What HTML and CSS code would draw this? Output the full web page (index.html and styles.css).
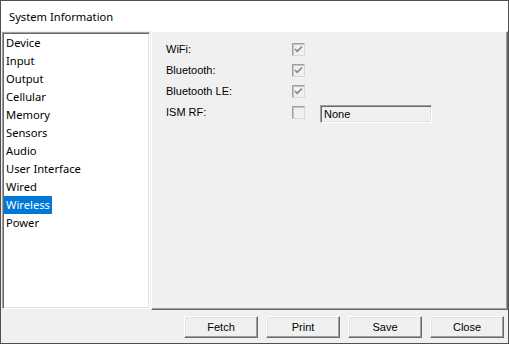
FILE: index.html
```html
<!DOCTYPE html>
<html>
<head>
<meta charset="utf-8">
<link rel="stylesheet" href="styles.css">
</head>
<body>
<div class="window">
  <div class="titlebar">System Information</div>
  <div class="main">
    <div class="listbox">
      <div class="item"><span>Device</span></div>
      <div class="item"><span>Input</span></div>
      <div class="item"><span>Output</span></div>
      <div class="item"><span>Cellular</span></div>
      <div class="item"><span>Memory</span></div>
      <div class="item"><span>Sensors</span></div>
      <div class="item"><span>Audio</span></div>
      <div class="item"><span>User Interface</span></div>
      <div class="item"><span>Wired</span></div>
      <div class="item selected"><span>Wireless</span></div>
      <div class="item"><span>Power</span></div>
    </div>
    <div class="panel">
      <div class="grid">
        <div class="label">WiFi:</div>
        <span class="check"><svg width="11" height="11" viewBox="0 0 11 11"><path d="M2 5 L4.2 7.3 L9 2.5" fill="none" stroke="#858585" stroke-width="1.6"/></svg></span>
        <div></div>
        <div class="label">Bluetooth:</div>
        <span class="check"><svg width="11" height="11" viewBox="0 0 11 11"><path d="M2 5 L4.2 7.3 L9 2.5" fill="none" stroke="#858585" stroke-width="1.6"/></svg></span>
        <div></div>
        <div class="label">Bluetooth LE:</div>
        <span class="check"><svg width="11" height="11" viewBox="0 0 11 11"><path d="M2 5 L4.2 7.3 L9 2.5" fill="none" stroke="#858585" stroke-width="1.6"/></svg></span>
        <div></div>
        <div class="label">ISM RF:</div>
        <span class="check"></span>
        <div class="textbox">None</div>
      </div>
    </div>
  </div>
  <div class="buttons">
    <div class="btn">Fetch</div>
    <div class="btn">Print</div>
    <div class="btn">Save</div>
    <div class="btn">Close</div>
  </div>
</div>
</body>
</html>
```
FILE: styles.css
```css
html, body {
  margin: 0;
  padding: 0;
  background: #f0f0f0;
}
.window {
  width: 509px;
  height: 344px;
  box-sizing: border-box;
  border: 1px solid #4f4f4f;
  background: #f0f0f0;
  display: flex;
  flex-direction: column;
  font-family: "Noto Sans", "Open Sans", sans-serif;
}
.titlebar {
  height: 30px;
  flex: none;
  background: #fff;
  display: flex;
  align-items: center;
  padding-left: 8px;
  font-size: 11.2px;
  color: #000;
}
.main {
  height: 279px;
  flex: none;
  display: flex;
  align-items: flex-start;
}
.listbox {
  margin: 1px 0 0 1px;
  width: 148px;
  height: 277px;
  box-sizing: border-box;
  background: #fff;
  border: 1px solid;
  border-color: #a0a0a0 #fff #fff #a0a0a0;
  box-shadow: inset 1px 1px 0 #696969, inset -1px -1px 0 #e3e3e3;
  padding: 1px 0 0 1px;
  font-size: 11.2px;
  color: #000;
}
.item {
  height: 18px;
  line-height: 18px;
}
.item span {
  display: inline-block;
  padding: 0 2px;
  height: 18px;
}
.item.selected span {
  background: #0078d7;
  color: #fff;
}
.panel {
  margin-left: 1px;
  flex: 1;
  height: 279px;
  box-sizing: border-box;
  border: 1px solid;
  border-color: #fff #696969 #696969 #fff;
  box-shadow: inset -1px -1px 0 #a0a0a0;
  padding: 11px 0 0 14px;
}
.grid {
  display: grid;
  grid-template-columns: 111px 13px 112px;
  column-gap: 15px;
  grid-auto-rows: 21px;
  align-items: start;
  font-family: "Liberation Sans", Arial, sans-serif;
  font-size: 11px;
  color: #000;
}
.label {
  line-height: 13px;
}
.check {
  width: 13px;
  height: 13px;
  box-sizing: border-box;
  border: 1px solid;
  border-color: #a0a0a0 #d8d8d8 #d8d8d8 #a0a0a0;
  box-shadow: inset 1px 1px 0 #c4c4c4;
  background: #f0f0f0;
  display: flex;
  align-items: center;
  justify-content: center;
}
.check svg {
  display: block;
}
.textbox {
  margin-top: -1px;
  height: 18px;
  box-sizing: border-box;
  border: 1px solid;
  border-color: #a0a0a0 #fff #fff #a0a0a0;
  box-shadow: inset 1px 1px 0 #696969, inset -1px -1px 0 #e3e3e3;
  background: #f0f0f0;
  padding: 0 0 0 3px;
  line-height: 16px;
}
.buttons {
  flex: 1;
  display: flex;
  justify-content: flex-end;
  gap: 8px;
  padding: 6px 4px 0 0;
}
.btn {
  width: 74px;
  height: 22px;
  box-sizing: border-box;
  border: 1px solid;
  border-color: #fff #696969 #696969 #fff;
  box-shadow: inset -1px -1px 0 #a0a0a0, inset 1px 1px 0 #e3e3e3;
  background: #f0f0f0;
  display: flex;
  align-items: center;
  justify-content: center;
  font-family: "Liberation Sans", Arial, sans-serif;
  font-size: 11px;
  color: #000;
}
```
